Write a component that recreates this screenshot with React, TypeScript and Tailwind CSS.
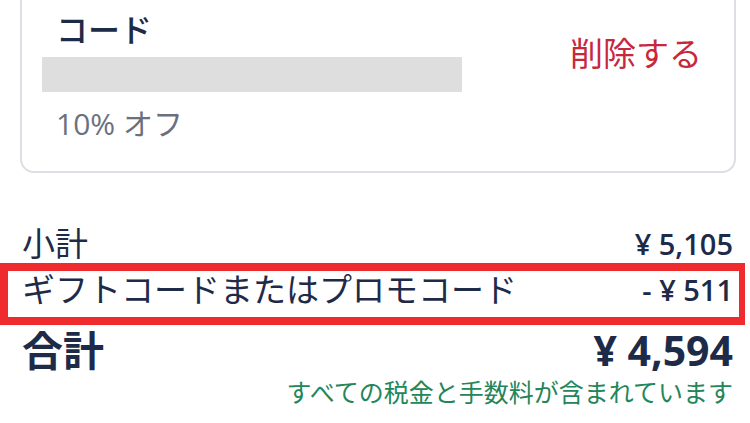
const font = { fontFamily: '"Open Sans", "Noto Sans CJK JP", sans-serif' };

function SummaryRow({
  label,
  value,
  className,
  valueClassName,
}: {
  label: string;
  value: string;
  className?: string;
  valueClassName?: string;
}) {
  return (
    <div className={`flex items-center justify-between ${className ?? ''}`}>
      <span>{label}</span>
      <span className={valueClassName}>{value}</span>
    </div>
  );
}

export default function App() {
  return (
    <div
      className="relative h-[423px] w-[750px] overflow-hidden bg-white text-[#1e2b48]"
      style={font}
    >
      {/* promo code card, top edge scrolled out of view */}
      <div className="ml-[20px] flex w-[716px] justify-between rounded-b-[14px] border-x-2 border-b-2 border-[#dcdfe3] pb-[27px] pl-[20px] pr-[32px]">
        <div>
          <div className="mt-[10px] pl-[14px] text-[32px] font-medium leading-[40px]">コード</div>
          <div className="mt-[7px] h-[35px] w-[420px] bg-[#dedede]" />
          <div className="mt-[12px] pl-[14px] text-[30px] leading-[40px] text-[#6b7080]">10% オフ</div>
        </div>
        <button className="mt-[34px] self-start text-[33px] leading-[40px] text-[#c8283d]">削除する</button>
      </div>

      <div className="pl-[22px] pr-[17px]">
        <SummaryRow
          label="小計"
          value="¥ 5,105"
          className="mt-[51px] text-[33px] leading-[40px]"
          valueClassName="text-[29px] font-semibold"
        />
        <SummaryRow
          label="ギフトコードまたはプロモコード"
          value="- ¥ 511"
          className="mt-[6px] text-[33px] leading-[40px]"
          valueClassName="text-[29px] font-semibold"
        />
        <SummaryRow label="合計" value="¥ 4,594" className="mt-[16px] text-[41px] font-bold leading-[48px]" />
        <div className="mt-[3px] text-right text-[25px] leading-[30px] text-[#23865a]">
          すべての税金と手数料が含まれています
        </div>
      </div>

      {/* annotation highlight over the discount row */}
      <div className="absolute left-0 top-[263px] h-[62px] w-[745px] border-y-8 border-l-8 border-r-[6px] border-[#ef2b2d]" />
    </div>
  );
}
